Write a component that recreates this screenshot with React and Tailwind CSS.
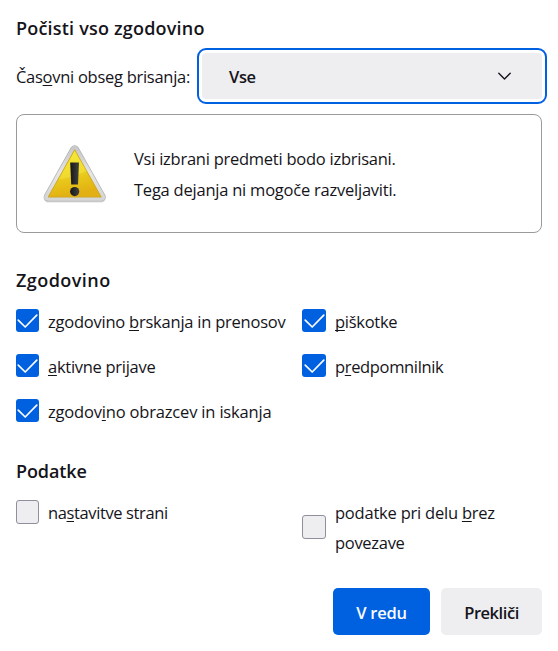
function Check({ className }) {
  return (
    <span className={`flex shrink-0 items-center justify-center rounded-[3px] bg-[#0061e0] ${className}`}>
      <svg width="23" height="23" viewBox="0 0 23 23" fill="none">
        <path d="M2.2 11.2 9.2 18 20.8 6.2" stroke="#fbfbfe" strokeWidth="1.7" strokeLinecap="round" strokeLinejoin="round" />
      </svg>
    </span>
  );
}

function Key({ children }) {
  return <span className="underline decoration-1 underline-offset-[2px] [text-decoration-skip-ink:none]">{children}</span>;
}

function Warning() {
  return (
    <svg width="66" height="62" viewBox="0 0 66 62" fill="none">
      <defs>
        <linearGradient id="rim" x1="0" y1="0" x2="0" y2="1">
          <stop offset="0" stopColor="#cacaca" />
          <stop offset="0.5" stopColor="#e6e6e6" />
          <stop offset="1" stopColor="#d6d6d6" />
        </linearGradient>
        <linearGradient id="fill" x1="0" y1="0" x2="0.25" y2="1">
          <stop offset="0" stopColor="#f3e62c" />
          <stop offset="0.5" stopColor="#ecd51f" />
          <stop offset="1" stopColor="#e2b012" />
        </linearGradient>
        <linearGradient id="mark" x1="0" y1="0" x2="1" y2="0">
          <stop offset="0" stopColor="#151515" />
          <stop offset="1" stopColor="#414141" />
        </linearGradient>
      </defs>
      <path d="M32.7 6.8 6.2 54h53z" transform="translate(0 1)" stroke="#8c8c8c" strokeOpacity="0.3" strokeWidth="9" strokeLinejoin="round" />
      <path d="M32.7 6.8 6.2 54h53z" stroke="#b4b4b4" strokeWidth="9" strokeLinejoin="round" />
      <path d="M32.7 6.8 6.2 54h53z" stroke="url(#rim)" strokeWidth="7.6" strokeLinejoin="round" />
      <path d="M32.7 6.8 6.2 54h53z" fill="url(#fill)" stroke="#cfa823" strokeWidth="1" strokeLinejoin="round" />
      <path d="M32.7 7.8 16.7 36.5C27 35 38 31 44.7 28.2z" fill="#fff45a" fillOpacity="0.3" />
      <path d="M28.2 19.5h8.8l-1 22h-6.8z" fill="url(#mark)" />
      <circle cx="32.7" cy="48.6" r="4.6" fill="url(#mark)" />
    </svg>
  );
}

export default function App() {
  return (
    <div className="h-[651px] w-[558px] bg-white px-4 pt-4 font-['Open_Sans',sans-serif] text-[16.5px] leading-[30px] whitespace-nowrap text-[#15141a]">
      <h1 className="text-[18px] leading-6 font-semibold tracking-[0.2px]">Počisti vso zgodovino</h1>

      <div className="mt-2 -mr-[5px] flex h-14 items-center">
        <span className="w-[181px] pt-px tracking-[-0.28px]">
          Čas<Key>o</Key>vni obseg brisanja:
        </span>
        <div className="h-14 w-[350px] rounded-[9px] border-2 border-[#0061e0] p-[3px]">
          <div className="flex h-full items-center justify-between rounded-[4px] bg-[#eeeef0] pr-[30px] pl-[27px]">
            <span className="pt-px font-semibold tracking-[-0.4px]">Vse</span>
            <svg width="15" height="9" viewBox="0 0 15 9" fill="none">
              <path d="M1.8 1.2 7.5 6.9l5.7-5.7" stroke="#15141a" strokeWidth="1.4" strokeLinecap="round" strokeLinejoin="round" />
            </svg>
          </div>
        </div>
      </div>

      <div className="mt-[10px] flex h-[119px] w-[526px] items-center rounded-lg border border-[#9a9a9d] pl-[25px]">
        <Warning />
        <div className="ml-[26px] leading-[31px]">
          <p className="tracking-[-0.25px]">Vsi izbrani predmeti bodo izbrisani.</p>
          <p className="tracking-[-0.23px]">Tega dejanja ni mogoče razveljaviti.</p>
        </div>
      </div>

      <h2 className="mt-[35px] text-[18px] leading-6 font-semibold tracking-[0.45px]">Zgodovino</h2>
      <div className="mt-[14px] grid grid-cols-[286px_1fr] gap-y-[15px]">
        <label className="flex gap-[9px]">
          <Check className="mt-[3px] size-[23px]" />
          <span className="pt-px -mb-px tracking-[-0.23px]">zgodovino <Key>b</Key>rskanja in prenosov</span>
        </label>
        <label className="flex gap-[9px]">
          <Check className="mt-[3px] h-[23px] w-6" />
          <span className="pt-px -mb-px tracking-[-0.28px]"><Key>p</Key>iškotke</span>
        </label>
        <label className="flex gap-[9px]">
          <Check className="mt-[3px] size-[23px]" />
          <span className="pt-px -mb-px tracking-[-0.28px]"><Key>a</Key>ktivne prijave</span>
        </label>
        <label className="flex gap-[9px]">
          <Check className="mt-[3px] h-[23px] w-6" />
          <span className="pt-px -mb-px tracking-[-0.35px]">p<Key>r</Key>edpomnilnik</span>
        </label>
        <label className="flex gap-[9px]">
          <Check className="mt-[3px] size-[23px]" />
          <span className="pt-px -mb-px tracking-[-0.18px]">zgodov<Key>i</Key>no obrazcev in iskanja</span>
        </label>
      </div>

      <h2 className="mt-[33px] text-[18px] leading-6 font-semibold tracking-[-0.12px]">Podatke</h2>
      <div className="mt-[14px] grid grid-cols-[286px_1fr]">
        <label className="flex items-start gap-[9px]">
          <span className="mt-[3px] h-6 w-[23px] rounded-[3px] border border-[#8f8f9d] bg-[#eeeef0]" />
          <span className="pt-px tracking-[-0.38px]">na<Key>s</Key>tavitve strani</span>
        </label>
        <label className="flex items-start gap-[9px]">
          <span className="mt-[18px] size-6 rounded-[3px] border border-[#8f8f9d] bg-[#eeeef0]" />
          <span className="pt-px">
            <span className="block tracking-[-0.22px]">podatke pri delu <Key>b</Key>rez</span>
            <span className="block tracking-[-0.3px]">povezave</span>
          </span>
        </label>
      </div>

      <div className="mt-[30px] flex justify-end gap-[11px] font-semibold">
        <button className="h-[47px] w-[97px] rounded-[5px] bg-[#0061e0] pt-[3px] tracking-[-0.25px] text-[#fbfbfe]">V redu</button>
        <button className="h-[47px] w-[101px] rounded-[5px] bg-[#eeeef0] pt-[3px] tracking-[-0.45px]">Prekliči</button>
      </div>
    </div>
  );
}
